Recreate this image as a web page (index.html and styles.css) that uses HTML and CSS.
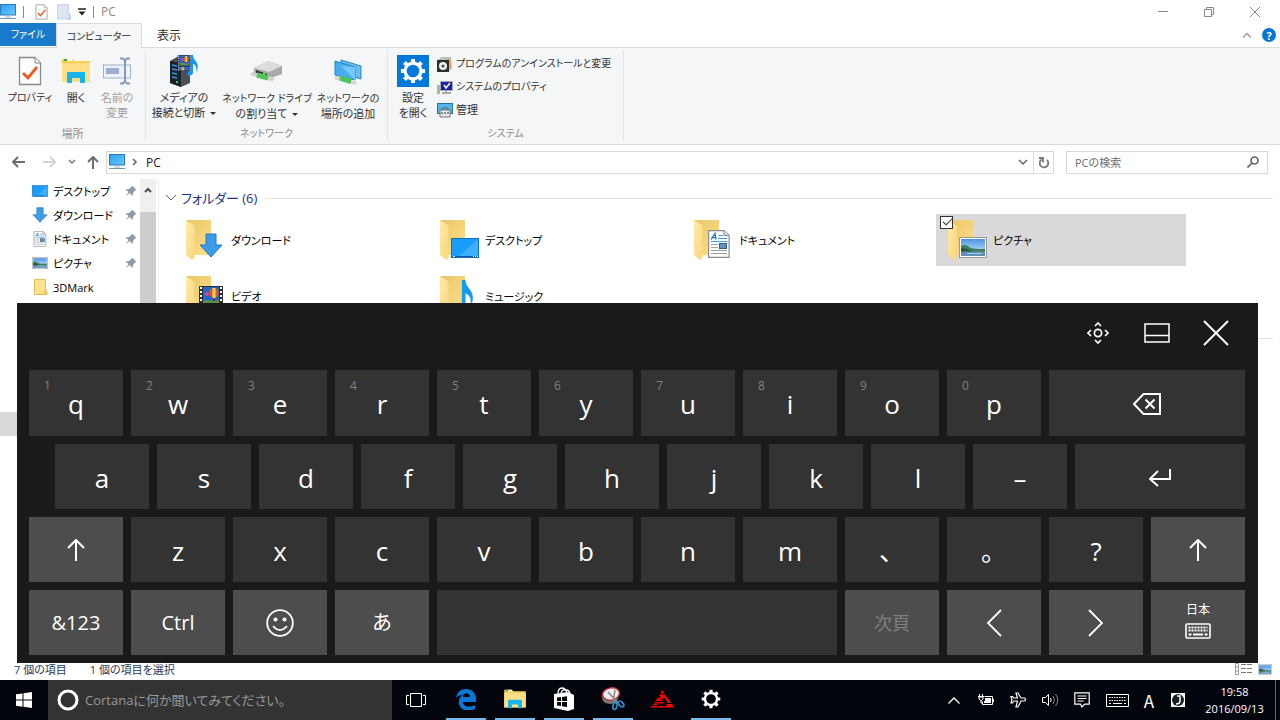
FILE: index.html
```html
<!DOCTYPE html>
<html lang="ja">
<head>
<meta charset="utf-8">
<title>PC</title>
<link rel="stylesheet" href="styles.css">
</head>
<body>
<svg class="defs" aria-hidden="true">
  <defs>
    <linearGradient id="blue" x1="0" y1="0" x2="1" y2="1"><stop offset="0" stop-color="#2aa0f0"/><stop offset="1" stop-color="#6cc6ff"/></linearGradient>
    <linearGradient id="back" x1="0" y1="0" x2="1" y2="1"><stop offset="0" stop-color="#e9c567"/><stop offset="1" stop-color="#ffe08a"/></linearGradient>
    <linearGradient id="flap" x1="0" y1="0" x2="1" y2="1"><stop offset="0" stop-color="#ffeaa8"/><stop offset="1" stop-color="#f7d77c"/></linearGradient>
    <linearGradient id="sky" x1="0" y1="0" x2="0" y2="1"><stop offset="0" stop-color="#4f95e6"/><stop offset="1" stop-color="#d6ebfb"/></linearGradient>
  </defs>
  <symbol id="pc" viewBox="0 0 16 16">
    <rect x=".5" y=".5" width="15" height="10.500" fill="url(#blue)" stroke="#2b7cb8"/>
    <path d="M5 13h6" stroke="#9fb6c8"/><path d="M0 14.500h16" stroke="#7b96ac"/>
  </symbol>
  <symbol id="checkdoc" viewBox="0 0 24 30">
    <path d="M1.500 1.500h15.500l5.500 5.500v21.500h-21z" fill="#fdfdfd" stroke="#8a8a8a" stroke-width="1.300"/>
    <path d="M17 1.500V7h5.500" fill="#eee" stroke="#8a8a8a"/>
    <path d="M5 17l5 5L19 11" fill="none" stroke="#f0591a" stroke-width="2.800"/>
  </symbol>
  <symbol id="folder" viewBox="0 0 40 42">
    <path d="M1 1h25v35H6z" fill="url(#back)"/>
    <path d="M1 1l8.500 6v32L7 41 1 36z" fill="url(#flap)"/>
  </symbol>
  <symbol id="picture" viewBox="0 0 28 21">
    <rect x=".5" y=".5" width="27" height="20" fill="#fff" stroke="#999"/>
    <rect x="2" y="2" width="24" height="17" fill="url(#sky)"/>
    <path d="M2 9c3-2 5-1 8 1s9 2 16 2v3H2z" fill="#3f7f55"/><path d="M2 11c6 0 9 3 14 4H2z" fill="#23583f"/>
    <path d="M2 14.500h24V19H2z" fill="#5b8fb4"/><path d="M8 16.500h15" stroke="#a9cadf"/>
  </symbol>
  <symbol id="down" viewBox="0 0 24 25">
    <path d="M7 1h10v11h6L12 24 1 12h6z" fill="#3d9be9" stroke="#2779bd"/>
  </symbol>
  <symbol id="document" viewBox="0 0 22 28">
    <path d="M.6.600h15.500l5 5v21.800H.6z" fill="#fff" stroke="#8c8c8c" stroke-width="1.200"/>
    <path d="M16 .5v5h5" fill="#ddd" stroke="#8c8c8c"/>
    <path d="M3 9.500l4-6 1 6M4.500 7.500h3" fill="none" stroke="#1979ca" stroke-width="1.300"/>
    <path d="M11 5.500h4M10 8.500h9M3 11.500h16" stroke="#3c9be0"/>
    <path d="M3 14.500h7M3 17.500h7M3 20.500h16M3 23.500h16" stroke="#a0a0a0"/>
    <rect x="11.500" y="13.500" width="7" height="5" fill="#5c93c0" stroke="#345d80"/>
  </symbol>
  <symbol id="desktop" viewBox="0 0 28 20">
    <rect x=".5" y=".5" width="27" height="19" fill="#1a9cfb" stroke="#0d6fc0"/>
    <path d="M27 1v17H8z" fill="#3fb0ff"/><path d="M1 18.500h26" stroke="#07589e"/><path d="M2 18.500h2M22 18.500h1M24 18.500h1M26 18.500h1" stroke="#fff"/>
  </symbol>
  <symbol id="film" viewBox="0 0 24 28">
    <path d="M0 0h24v28H0z" fill="#2d2d2d"/>
    <path d="M2 1v26M22 1v26" stroke="#fff" stroke-width="2" stroke-dasharray="2 2"/>
    <path d="M4 1h16v17H4zM4 20h16v7H4z" fill="#2b63c9"/>
    <ellipse cx="15" cy="7" rx="4.500" ry="5" fill="#e4542e"/><path d="M13.500 2h3v10h-3z" fill="#f5d932"/><path d="M14 13h2v2h-2z" fill="#6b3b16"/>
    <circle cx="8" cy="8" r="2" fill="#d9479a"/><path d="M4 15c5-3 8 2 16-1v4H4z" fill="#5c9447"/>
    <circle cx="9" cy="24" r="3" fill="#f2b22a"/>
  </symbol>
  <symbol id="note" viewBox="0 0 14 28">
    <path d="M4 0h3c0 7 7 8 6 16-.500 3-1 4-2 6 1-6 0-9-4-11v12c-1 4-7 5-7 1 0-3 3-4 4-4z" fill="#129bf0"/>
  </symbol>
  <symbol id="pin" viewBox="0 0 12 12">
    <path d="M7 .5l4.500 4.500-1.500.5-2 2.500-.5 3-3-3L.5 11.500l3-4.500-3-2.500 3.500-.5L6.500 2z" fill="#8d9aa8"/>
  </symbol>
  <symbol id="explorer" viewBox="0 0 28 26">
    <path d="M0 1h10l2 2h16v21H0z" fill="#f9cf58"/><path d="M2 2h8" stroke="#fff" stroke-width="2"/><path d="M2 2h3" stroke="#3aa54a" stroke-width="2"/>
    <path d="M0 5h28v19H0z" fill="#ffdf85"/>
    <path d="M5 25V15q0-1 1-1h16q1 0 1 1v10h-5v-5h-8v5z" fill="#18b4ea"/>
  </symbol>
  <symbol id="gear" viewBox="-14 -14 28 28">
    <circle r="8.500" fill="none" stroke="#fff" stroke-width="3.400"/>
    <g stroke="#fff" stroke-width="4.400"><path d="M0-9v-4M0 9v4M9 0h4M-9 0h-4M6.400-6.400l2.800-2.800M-6.400 6.400l-2.800 2.800M6.400 6.400l2.800 2.800M-6.400-6.400l-2.800-2.800"/></g>
  </symbol>
</svg>

<div class="screen">
  <main class="explorer">
    <header class="titlebar">
      <svg class="i16"><use href="#pc"/></svg>
      <span class="tick"></span>
      <button class="quick" aria-label="プロパティ"><svg width="13" height="16"><use href="#checkdoc"/></svg></button>
      <button class="quick" aria-label="新しいフォルダー"><svg width="14" height="16"><path d="M.5.500h11v9l2 2v3.500H.5z" fill="#dce5f2" stroke="#c9d5e8"/><path d="M11 10h2v5h-3" fill="none" stroke="#b7c6df"/></svg></button>
      <button class="quick drop" aria-label="カスタマイズ"><svg width="8" height="8"><path d="M0 1h8" stroke="#222" stroke-width="1.500"/><path d="M.5 3.500h7L4 7.500z" fill="#222"/></svg></button>
      <span class="tick"></span>
      <span class="caption">PC</span>
      <div class="winbuttons">
        <button aria-label="最小化"><svg width="12" height="12"><path d="M1 5.500h10" stroke="#888"/></svg></button>
        <button aria-label="元に戻す"><svg width="12" height="12" fill="none" stroke="#888"><path d="M1.500 3.500h7v7h-7zM3.500 3.500v-2h7v7h-2"/></svg></button>
        <button aria-label="閉じる"><svg width="12" height="12" stroke="#888"><path d="M1 1l10 10M11 1L1 11"/></svg></button>
      </div>
    </header>
    <nav class="tabs">
      <button class="tab file kana">ファイル</button>
      <button class="tab active kana">コンピューター</button>
      <button class="tab">表示</button>
      <div class="tabtools">
        <button aria-label="リボンの最小化"><svg width="10" height="8"><path d="M1 6.500l4-4 4 4" fill="none" stroke="#a0a0a0" stroke-width="1.500"/></svg></button>
        <button class="help" aria-label="ヘルプ">?</button>
      </div>
    </nav>
    <section class="ribbon">
      <div class="group places">
        <div class="tools">
          <button class="tool wide"><svg width="26" height="30"><use href="#checkdoc"/></svg><span class="kana">プロパティ</span></button>
          <button class="tool open"><svg width="28" height="26"><use href="#explorer"/></svg><span>開く</span></button>
          <button class="tool rename"><svg width="28" height="28" fill="none" stroke="#9fb0cc"><rect x=".5" y="8" width="27" height="13" fill="#eef2f8"/><path d="M3 11h13v6H3z" fill="#9dafcf" stroke="none"/><path d="M17 1.500h3l2 2 2-2h3M22 3v21M17 26.500h3l2-2.500 2 2.500h3" stroke="#8799b6" stroke-width="2"/></svg><span>名前の<br>変更</span></button>
        </div>
        <h2>場所</h2>
      </div>
      <div class="group network">
        <div class="tools">
          <button class="tool media"><svg width="32" height="32"><path d="M2 6l7-4 13 1v25l-9 4-11-4z" fill="#4c4f55"/><path d="M2 6l11 2v24L2 28z" fill="#1d2026"/><path d="M4 10l5 1M4 14l5 1M4 18l5 1M4 22l5 1" stroke="#2c9df0" stroke-width="1.500"/><circle cx="9" cy="27" r="1" fill="#3f7"/><svg x="9" y="0" width="15" height="16"><use href="#film"/></svg><svg x="18" y="0" width="14" height="22"><use href="#note"/></svg></svg><span>メディアの<br>接続と切断<i class="caret"></i></span></button>
          <button class="tool drive"><svg width="32" height="22"><path d="M3 8L17 1l14 5v8l-13 5-15-5z" fill="#a9a9a9"/><path d="M3 8L17 1l14 5-13 6z" fill="#dcdcdc"/><path d="M5 10l11 4v3L5 13z" fill="#333"/><path d="M12 14h2" stroke="#5f6" stroke-width="2"/><path d="M2 14l19 5" stroke="#d0d0d0" stroke-width="4" stroke-linecap="round"/><path d="M6 15l11 3" stroke="#52c35a" stroke-width="5"/></svg><span><span class="kana">ネットワーク ドライブ</span><br>の割り当て<i class="caret"></i></span></button>
          <button class="tool place"><svg width="30" height="27"><path d="M8 2l20 6v13L8 15z" fill="#6bbdf1" stroke="#2a84c1"/><path d="M2 3l20 6v13L2 17z" fill="#46adf3" stroke="#2a84c1"/><path d="M22 9v13L8 8z" fill="#74c8fa"/><path d="M3 20l19 5" stroke="#d2d2d2" stroke-width="3" stroke-linecap="round"/><path d="M7 20l11 3.500" stroke="#52c35a" stroke-width="5"/></svg><span><span class="kana">ネットワークの</span><br>場所の追加</span></button>
        </div>
        <h2 class="kana">ネットワーク</h2>
      </div>
      <div class="group system">
        <div class="tools">
          <button class="tool set"><svg class="settile" width="32" height="32"><svg x="3" y="3" width="26" height="26"><use href="#gear"/></svg></svg><span>設定<br>を開く</span></button>
          <div class="smalls">
            <button class="kana"><svg class="i16"><path d="M1 4l3-3h10l1 12-4 2H1z" fill="#b8c2b6"/><path d="M10 2l4 2v9l-4-2z" fill="#e5a36c"/><rect y="4" width="12" height="12" fill="#2d302d"/><circle cx="6" cy="10" r="4" fill="#eee"/><circle cx="6" cy="10" r="1.500" fill="#444"/></svg>プログラムのアンインストールと変更</button>
            <button class="kana"><svg class="i16"><path d="M0 6h3v9H0z" fill="#b0b0b0"/><rect x="3.500" y="2.500" width="12" height="9" fill="#1724a6" stroke="#aaa"/><path d="M7 6l2 3 4-5" fill="none" stroke="#fff" stroke-width="1.500"/><path d="M5 14h9M9 12v2" stroke="#aaa" stroke-width="2"/></svg>システムのプロパティ</button>
            <button><svg class="i16"><rect x=".5" y="1.500" width="15" height="10" fill="#52b6ed" stroke="#28719e"/><path d="M3 8h10v7H3z" fill="#e7e7e7" stroke="#777"/><path d="M5 8V6h6v2" fill="none" stroke="#666"/><path d="M4 11h8" stroke="#333" stroke-dasharray="2 1"/></svg>管理</button>
          </div>
        </div>
        <h2 class="kana">システム</h2>
      </div>
    </section>
    <div class="addressrow">
      <button class="nav" aria-label="戻る"><svg width="14" height="12" fill="none" stroke="#6d6d6d" stroke-width="2"><path d="M1 6h12M6 1L1 6l5 5"/></svg></button>
      <button class="nav" aria-label="進む"><svg width="14" height="12" fill="none" stroke="#d4d4d4" stroke-width="2"><path d="M1 6h12M8 1l5 5-5 5"/></svg></button>
      <button class="nav tiny" aria-label="履歴"><svg width="8" height="6" fill="none" stroke="#777" stroke-width="1.500"><path d="M1 1l3 3 3-3"/></svg></button>
      <button class="nav up" aria-label="上へ"><svg width="12" height="13" fill="none" stroke="#6d6d6d" stroke-width="2"><path d="M6 13V1M1 6l5-5 5 5"/></svg></button>
      <div class="address">
        <svg class="i16"><use href="#pc"/></svg>
        <svg width="6" height="8" fill="none" stroke="#666" stroke-width="1.500"><path d="M1 1l3 3-3 3"/></svg>
        <button class="crumb">PC</button>
        <button class="adrop" aria-label="以前の場所"><svg width="10" height="7" fill="none" stroke="#666" stroke-width="1.500"><path d="M1 1l4 4 4-4"/></svg></button>
        <button class="refresh" aria-label="更新"><svg width="12" height="13" fill="none" stroke="#777" stroke-width="1.800"><path d="M9 4a4.300 4.300 0 1 1-5.500-.4"/><path d="M1 2h4v4.500"/></svg></button>
      </div>
      <label class="search"><input type="text" placeholder="PCの検索" aria-label="PCの検索"><svg width="12" height="12" fill="none" stroke="#666" stroke-width="1.700"><circle cx="7.500" cy="4.500" r="3.500"/><path d="M5 7L.5 11.500"/></svg></label>
    </div>
    <div class="body">
      <aside class="side">
        <a href="#" class="row"><svg width="16" height="12"><use href="#desktop"/></svg><span>デスクトップ</span><svg class="pin"><use href="#pin"/></svg></a>
        <a href="#" class="row"><svg class="i16"><use href="#down"/></svg><span>ダウンロード</span><svg class="pin"><use href="#pin"/></svg></a>
        <a href="#" class="row"><svg class="i16"><use href="#document"/></svg><span>ドキュメント</span><svg class="pin"><use href="#pin"/></svg></a>
        <a href="#" class="row"><svg width="16" height="12"><use href="#picture"/></svg><span>ピクチャ</span><svg class="pin"><use href="#pin"/></svg></a>
        <a href="#" class="row"><svg class="i16"><path d="M2.500.5h11v10l1.500 2v3H2.500z" fill="#ffe08d" stroke="#e5bd55"/><path d="M12 11h2v4h-2z" fill="#f3c95c"/></svg><span>3DMark</span></a>
        <div class="current"></div>
      </aside>
      <div class="scroll"><button aria-label="上へスクロール"><svg width="8" height="6" fill="none" stroke="#505050" stroke-width="2"><path d="M1 5l3-3 3 3"/></svg></button><div class="thumb"></div></div>
      <section class="content">
        <h3 class="heading"><svg width="12" height="8" fill="none" stroke="#666"><path d="M1 1l5 5 5-5"/></svg>フォルダー (6)</h3>
        <div class="tiles">
          <div class="tile"><div class="thumbnail"><svg width="40" height="42"><use href="#folder"/></svg><svg class="over" width="24" height="25"><use href="#down"/></svg></div>ダウンロード</div>
          <div class="tile"><div class="thumbnail"><svg width="40" height="42"><use href="#folder"/></svg><svg class="over" width="28" height="20"><use href="#desktop"/></svg></div>デスクトップ</div>
          <div class="tile"><div class="thumbnail"><svg width="40" height="42"><use href="#folder"/></svg><svg class="over" width="22" height="28"><use href="#document"/></svg></div>ドキュメント</div>
          <div class="tile selected"><div class="thumbnail"><svg width="40" height="42"><use href="#folder"/></svg><svg class="over" width="28" height="21"><use href="#picture"/></svg></div><label for="pick">ピクチャ</label><input id="pick" type="checkbox" checked></div>
          <div class="tile"><div class="thumbnail"><svg width="40" height="42"><use href="#folder"/></svg><svg class="over" width="24" height="28"><use href="#film"/></svg></div>ビデオ</div>
          <div class="tile"><div class="thumbnail"><svg width="40" height="42"><use href="#folder"/></svg><svg class="over" width="17" height="34"><use href="#note"/></svg></div>ミュージック</div>
        </div>
        <div class="rule"></div>
      </section>
    </div>
    <footer class="status">
      <span>7 個の項目</span><span>1 個の項目を選択</span>
      <div class="views">
        <button aria-label="詳細"><svg width="17" height="12" fill="none"><path d="M.5.500h3v11h-3zM.5 4h3M.5 8h3" stroke="#999"/><path d="M6 1.500h11M6 5.500h11M6 9.500h11" stroke="#777" stroke-dasharray="5 1"/></svg></button>
        <button aria-label="大アイコン"><svg width="14" height="11"><use href="#picture"/></svg></button>
      </div>
    </footer>
  </main>

  <footer class="taskbar">
    <button class="start" aria-label="スタート"><svg width="16" height="16" fill="#fff"><path d="M0 2.300l6.500-.9v6.200H0zM7.500 1.200L16 0v7.600H7.500zM0 8.500h6.500v6.200L0 13.800zM7.500 8.500H16V16l-8.500-1.200z"/></svg></button>
    <label class="cortana"><svg width="22" height="22"><circle cx="11" cy="11" r="9" fill="none" stroke="#fff" stroke-width="3"/></svg><input type="text" placeholder="Cortanaに何か聞いてみてください。" aria-label="Cortana"></label>
    <button class="taskview" aria-label="タスク ビュー"><svg width="20" height="14" fill="none" stroke="#fff"><path d="M4.500.5h11v13h-11zM3 2.500H.5v9H3M17 2.500h2.500v9H17"/></svg></button>
    <div class="apps">
      <button class="open" aria-label="Edge"><svg width="20" height="21"><path d="M0 9C1 3 5 0 10 0c6 0 10 4 10 10v3H7c0 5 7 6 12 3v4C10 24 2 20 3 12c0-3 2-5 4-6C4 6 1 7 0 9zm7-1h7c0-5-7-5-7 0z" fill="#0a78d7"/></svg></button>
      <button class="open" aria-label="エクスプローラー"><svg width="22" height="20"><use href="#explorer"/></svg></button>
      <button class="open" aria-label="ストア"><svg width="22" height="24"><path d="M5 7c0-4 1-6 4-6s4 2 5 5M8 7c0-3 2-5 5-4 3 0 4 2 4 5" fill="none" stroke="#fff" stroke-width="1.300"/><path d="M1 7l14-2 6 3v14l-6 2-14-3z" fill="#fff"/><path d="M4 10.500l4-.5v4H4zM9 10l5-.8V14H9zM4 15h4v4l-4-.6zM9 15h5v5l-5-.8z" fill="#05070c"/></svg></button>
      <button class="open" aria-label="Snipping Tool"><svg width="24" height="24" fill="none"><ellipse cx="9" cy="11" rx="8" ry="6" fill="#777"/><ellipse cx="10" cy="7" rx="8.500" ry="6" fill="#eee" stroke="#c8343c" stroke-width="1.500" transform="rotate(-12 10 7)"/><path d="M7 5l10 11M14 3l-2 13" stroke="#888" stroke-width="1.500"/><ellipse cx="14" cy="19" rx="2" ry="3.500" stroke="#2e94d6" stroke-width="1.600" transform="rotate(15 14 19)"/><ellipse cx="20" cy="17" rx="2" ry="3.500" stroke="#2e94d6" stroke-width="1.600" transform="rotate(-45 20 17)"/></svg></button>
      <button aria-label="アプリ"><svg width="24" height="18" fill="#f00"><path d="M12 0l2.500 3.500h-4L11 2zM10 4.500h5l6 8.500h-3L14 7l-1.500 2H9l2-2.500H8.700zM7.500 8h2l-1 1.500h4.500l-1 1.500H5.500zM5 12h8l1 1.500H4zM3 14h4v1H2.300zM16 14h6l2 3.500H0L1.500 16H17z"/></svg></button>
      <button class="open" aria-label="設定"><svg width="20" height="20"><use href="#gear"/></svg></button>
    </div>
    <div class="tray">
      <button aria-label="隠れているインジケーター"><svg width="12" height="7" fill="none" stroke="#fff" stroke-width="1.300"><path d="M.5 6.500L6 1l5.500 5.500"/></svg></button>
      <button aria-label="電源"><svg width="16" height="12"><path d="M6.500 2.500h8v8h-10v-3" fill="none" stroke="#fff"/><path d="M7 4h6v5H6V7h1zM15 5h1v3h-1z" fill="#fff"/><path d="M1.500 0v2M4.500 0v2M0 2.500h6M1 3h4v2L3.500 6.500h-1L1 5zM3 6v3h2" fill="none" stroke="#fff"/></svg></button>
      <button aria-label="機内モード"><svg width="16" height="16" fill="none" stroke="#fff" stroke-width="1.200"><path d="M6 1h2l3 5h3c2 0 2 3 0 3h-3l-3 6H6l1.500-6H4l-1.500 2H1l1-3.500L1 4.500h1.500L4 6h3.500z"/></svg></button>
      <button aria-label="音量"><svg width="17" height="14" fill="none" stroke="#fff"><path d="M.5 4.500h3l3-3v11l-3-3h-3zM8.500 5q1.500 2 0 4"/><path d="M11 3q3 4 0 8M13.500 1q4.500 6 0 12" stroke="#888"/></svg></button>
      <button aria-label="通知"><svg width="16" height="16" fill="none" stroke="#fff" stroke-width="1.200"><path d="M.8.800h14.400v11.400h-4.400L8 15l-1.500-2.800H.8zM3.500 4h9M3.500 6.500h9M3.500 9h6"/></svg></button>
      <button class="kb" aria-label="タッチ キーボード"><svg width="23" height="13" fill="none" stroke="#fff"><path d="M.5.500h22v12H.5z"/><path d="M3 3.500h17M3 6.500h17" stroke-dasharray="1.500 1"/><path d="M3 9.500h2M7 9.500h9M18 9.500h2"/></svg></button>
      <button class="mode">A</button>
      <button class="ime" aria-label="IME"><svg width="14" height="14"><path d="M0 0h14v14H0z" fill="#fff"/><circle cx="7" cy="7" r="6" fill="#1a1d22"/><path d="M6 3h3v5q0 3-4 3" fill="none" stroke="#fff" stroke-width="1.500"/></svg></button>
    </div>
    <div class="clock"><time>19:58</time><time>2016/09/13</time></div>
    <button class="peek" aria-label="デスクトップの表示"></button>
  </footer>

  <section class="keyboard" aria-label="タッチ キーボード">
    <div class="kbar">
      <button aria-label="移動"><svg width="22" height="22" fill="none" stroke="#fff" stroke-width="1.700"><circle cx="11" cy="11" r="3.600"/><path d="M8 4l3-3 3 3M8 18l3 3 3-3M4 8l-3 3 3 3M18 8l3 3-3 3"/></svg></button>
      <button aria-label="固定"><svg width="26" height="20" fill="none" stroke="#fff" stroke-width="1.500"><path d="M1 1h24v18H1zM1 12.500h24"/></svg></button>
      <button aria-label="閉じる"><svg width="26" height="26" stroke="#fff" stroke-width="2"><path d="M1 1l24 24M25 1L1 25"/></svg></button>
    </div>
    <div class="keys top">
      <button><small>1</small>q</button><button><small>2</small>w</button><button><small>3</small>e</button><button><small>4</small>r</button><button><small>5</small>t</button><button><small>6</small>y</button><button><small>7</small>u</button><button><small>8</small>i</button><button><small>9</small>o</button><button><small>0</small>p</button>
      <button class="span2" aria-label="Backspace"><svg width="28" height="22" fill="none" stroke="#fff" stroke-width="2"><path d="M1 11L10.500 1H27v20H10.500zM12.500 6.500l9 9M21.500 6.500l-9 9"/></svg></button>
    </div>
    <div class="keys home">
      <button>a</button><button>s</button><button>d</button><button>f</button><button>g</button><button>h</button><button>j</button><button>k</button><button>l</button><button>–</button>
      <button aria-label="Enter"><svg width="22" height="18" fill="none" stroke="#fff" stroke-width="2"><path d="M21 0v10H1M9 2L1 10l8 7"/></svg></button>
    </div>
    <div class="keys">
      <button class="fn" aria-label="Shift"><svg width="18" height="22" fill="none" stroke="#fff" stroke-width="2"><path d="M9 22V1M1 9l8-8 8 8"/></svg></button>
      <button>z</button><button>x</button><button>c</button><button>v</button><button>b</button><button>n</button><button>m</button><button>、</button><button>。</button><button>?</button>
      <button class="fn" aria-label="Shift"><svg width="18" height="22" fill="none" stroke="#fff" stroke-width="2"><path d="M9 22V1M1 9l8-8 8 8"/></svg></button>
    </div>
    <div class="keys">
      <button class="fn">&amp;123</button><button class="fn">Ctrl</button>
      <button class="fn" aria-label="絵文字"><svg width="28" height="28" fill="none" stroke="#fff" stroke-width="1.800"><circle cx="14" cy="14" r="12.800"/><path d="M7 17q7 8 14 0"/><circle cx="9.500" cy="10.500" r="1.200" fill="#fff"/><circle cx="18.500" cy="10.500" r="1.200" fill="#fff"/></svg></button>
      <button class="fn">あ</button><button class="space" aria-label="Space"></button><button class="fn" disabled>次頁</button>
      <button class="fn" aria-label="左"><svg width="16" height="28" fill="none" stroke="#fff" stroke-width="1.800"><path d="M15 1L2 14l13 13"/></svg></button>
      <button class="fn" aria-label="右"><svg width="16" height="28" fill="none" stroke="#fff" stroke-width="1.800"><path d="M1 1l13 13L1 27"/></svg></button>
      <button class="fn lang">日本<svg width="26" height="16" fill="none" stroke="#fff"><rect x="1" y="1" width="24" height="14" rx="1" stroke-width="1.600"/><path d="M3.500 4.500h19M3.500 7.500h19" stroke-width="2" stroke-dasharray="2 1"/><path d="M3.500 11.500h3M8 11.500h10M19.500 11.500h3" stroke-width="2"/></svg></button>
    </div>
  </section>
</div>
</body>
</html>
```

FILE: styles.css
```css
* { box-sizing: border-box; }
body { margin: 0; font: 11px/15px "Open Sans", "Noto Sans CJK JP", sans-serif; color: #1a1a1a; }
button, input { font: inherit; color: inherit; border: 0; background: none; padding: 0; margin: 0; }
button { display: flex; align-items: center; justify-content: center; }
h2, h3 { margin: 0; font-weight: 400; }
a { color: inherit; text-decoration: none; }
svg { flex: none; display: block; }
.defs { position: absolute; width: 0; height: 0; }
.i16 { width: 16px; height: 16px; }

.screen { position: relative; display: flex; flex-direction: column; height: 100vh; min-height: 640px; overflow: hidden; }
.explorer { flex: 1; display: flex; flex-direction: column; min-height: 0; background: #fff; font-feature-settings: "palt"; }

.titlebar { display: flex; align-items: center; height: 23px; flex: none; }
.tick { width: 1px; height: 12px; background: #8a8a8a; margin: 0 7px; }
.quick { margin-left: 9px; }
.tick + .quick { margin-left: 4px; }
.quick.drop { margin: 0 0 0 7px; }
.caption { color: #8a8a8a; font-size: 12px; }
.winbuttons { display: flex; margin-left: auto; padding-right: 2px; }
.winbuttons button { width: 46px; height: 22px; }

.tabs { display: flex; height: 25px; flex: none; border-bottom: 1px solid #dadbdc; }
.tab { padding: 0 15px; height: 24px; color: #333; font-size: 12px; }
.tab.file { width: 56px; padding: 0; height: 23px; background: #1979ca; color: #fff; }
.tab.active { width: 86px; padding: 0; height: 25px; background: #f5f6f7; border: 1px solid #dadbdc; border-bottom: 0; }
.tabtools { display: flex; align-items: center; gap: 10px; margin-left: auto; padding-right: 4px; }
.help { width: 14px; height: 14px; border-radius: 50%; background: #0a74d1; color: #fff; font-weight: 700; }

.ribbon { display: flex; flex: none; height: 97px; padding: 2px 0 3px; background: #f5f6f7; border-bottom: 1px solid #dadbdc; }
.group { display: flex; flex-direction: column; border-right: 1px solid #e2e3e4; padding-top: 5px; }
.places { width: 146px; }
.network { width: 242px; }
.system { width: 236px; }
.places .tools { padding-left: 6px; }
.network .tools { padding-left: 4px; }
.system .tools { padding-left: 7px; }
.group h2 { font-size: 11px; line-height: 15px; color: #8c8c8c; text-align: center; margin-top: auto; }
.tools { display: flex; align-items: flex-start; }
.tool { display: grid; grid-template-rows: 32px auto; gap: 3px; justify-items: center; justify-content: center; width: 68px; color: #333; white-space: nowrap; }
.tool > svg { margin: auto; }
.tool.wide { width: 48px; }
.tool.open { width: 44px; }
.tool.rename { width: 38px; color: #a0a0a0; }
.tool.drive { width: 98px; }
.tool.place { width: 64px; }
.tool.set { width: 36px; }
.kana, .group h2.kana { font-size: 10px; }
.settile { background: #0078d7; }
.caret { display: inline-block; border: 3px solid transparent; border-top-color: #333; border-bottom: 0; margin: 0 0 2px 5px; }
.smalls { display: flex; flex-direction: column; align-items: flex-start; padding-left: 6px; margin-top: -3px; }
.smalls button { height: 23px; gap: 3px; white-space: nowrap; color: #333; }

.addressrow { display: flex; align-items: center; flex: none; height: 34px; padding: 0 12px 0 4px; }
.nav { width: 30px; height: 24px; }
.nav.tiny { width: 16px; }
.nav.up { width: 26px; }
.address { flex: 1; display: flex; align-items: center; height: 23px; border: 1px solid #d9d9d9; padding-left: 2px; }
.address > svg + svg { margin: 0 8px 0 7px; }
.crumb { font-size: 12px; }
.adrop { margin-left: auto; width: 20px; height: 21px; }
.refresh { width: 20px; height: 21px; border-left: 1px solid #d9d9d9; }
.search { display: flex; align-items: center; width: 202px; height: 23px; margin-left: 12px; border: 1px solid #d9d9d9; padding: 0 8px; }
.search input { flex: 1; min-width: 0; outline: 0; }
.search input::placeholder { color: #6d6d6d; opacity: 1; }

.body { flex: 1; display: flex; min-height: 0; overflow: hidden; }
.side { width: 140px; flex: none; display: flex; flex-direction: column; }
.row { display: flex; align-items: center; flex: none; height: 24px; padding: 0 3px 0 32px; gap: 5px; color: #000; }
.pin { width: 12px; height: 12px; margin-left: auto; }
.current { flex: none; height: 24px; margin-top: 113px; background: #d9d9d9; }
.scroll { width: 16px; flex: none; background: #f0f0f0; display: flex; flex-direction: column; }
.scroll button { height: 33px; padding-bottom: 12px; }
.thumb { flex: 1; background: #cdcdcd; }
.content { flex: 1; min-width: 0; margin-left: 2px; border-left: 1px solid #f0f0f0; padding: 9px 7px 0 6px; }
.heading { display: flex; align-items: center; gap: 4px; font-size: 13px; line-height: 20px; color: #1e3287; }
.heading::after { content: ""; flex: 1; height: 1px; margin-left: 4px; background: #e2e2e2; }
.tiles { display: grid; grid-template-columns: repeat(auto-fill, 250px); gap: 4px; padding: 6px 0 0 9px; }
.tile { position: relative; height: 52px; display: flex; align-items: center; gap: 6px; padding-left: 11px; color: #000; }
.tile.selected { background: #d9d9d9; }
.thumbnail { position: relative; }
.over { position: absolute; left: 12px; right: 0; bottom: 3px; margin: 0 auto; }
.tile input { position: absolute; left: 4px; top: 2px; width: 13px; height: 13px; appearance: none; background: #fff; border: 1px solid #333; }
.tile input::before { content: ""; position: absolute; left: 2px; top: 1px; width: 8px; height: 4px; border: solid #333; border-width: 0 0 1px 1px; transform: rotate(-45deg); }
.rule { height: 1px; background: #e2e2e2; margin-top: 16px; }

.status { display: flex; align-items: center; flex: none; height: 22px; padding: 0 8px 0 14px; gap: 23px; color: #1e395b; }
.views { display: flex; gap: 6px; margin-left: auto; }

.taskbar { display: flex; flex: none; height: 40px; background: #02050b; color: #fff; }
.start { width: 48px; }
.cortana { display: flex; align-items: center; width: 344px; background: #333; padding-left: 9px; gap: 6px; font-size: 13px; font-feature-settings: "palt"; }
.cortana input { flex: 1; min-width: 0; outline: 0; }
.cortana input::placeholder { color: #999; opacity: 1; }
.taskview { width: 48px; }
.apps { display: flex; gap: 9px; padding-left: 6px; }
.apps button { width: 40px; border-bottom: 2px solid transparent; }
.apps .open { border-bottom-color: #76b9ed; }
.tray { display: flex; margin-left: auto; }
.tray button { width: 32px; }
.tray .kb { width: 38px; }
.tray .mode { width: 26px; font-size: 17px; font-family: "Noto Sans CJK JP", sans-serif; }
.clock { display: flex; flex-direction: column; justify-content: center; width: 81px; text-align: center; line-height: 17px; }
.peek { width: 5px; border-left: 1px solid #666; }

.keyboard { position: absolute; left: 17px; right: 22px; bottom: 57px; background: #1a1a1a; color: #fff; padding: 0 13px 8px 12px; display: flex; flex-direction: column; gap: 8px; }
.kbar { display: flex; justify-content: flex-end; height: 59px; }
.kbar button { width: 59px; }
.keys { display: grid; grid-template-columns: repeat(12, minmax(0, 1fr)); gap: 8px; height: 65px; font-size: 26px; line-height: 36px; }
.keys.top { height: 66px; }
.keys.home { grid-template-columns: repeat(10, minmax(0, 47fr)) minmax(0, 85fr); padding-left: 26px; }
.keys button { position: relative; background: #333; padding-top: 2px; }
.keys small { position: absolute; left: 15px; top: 8px; font-size: 12px; line-height: 16px; color: #808080; }
.keys .span2 { grid-column: span 2; }
.keys .space { grid-column: span 4; }
.keys .fn { background: #4d4d4d; font-size: 20px; padding: 0; }
.keys .fn:disabled { color: #808080; font-size: 18px; }
.keys .lang { flex-direction: column; gap: 4px; padding-bottom: 6px; font-size: 12px; line-height: 18px; }
```
